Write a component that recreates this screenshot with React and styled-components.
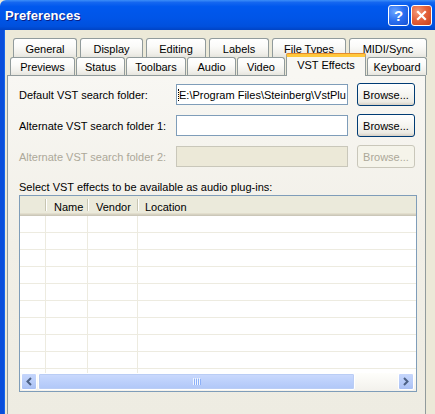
import React from 'react';
import styled, { createGlobalStyle, css } from 'styled-components';

const GlobalStyle = createGlobalStyle`
  body {
    margin: 0;
    background: #ece9d8;
    font-family: Tahoma, "Liberation Sans", Arial, sans-serif;
    font-size: 11px;
    color: #000;
  }
`;

const Window = styled.div`
  width: 435px;
  height: 414px;
  overflow: hidden;
  display: flex;
  flex-direction: column;
  background: #ece9d8;
`;

const TitleBar = styled.div`
  height: 30px;
  flex: none;
  display: flex;
  align-items: center;
  padding: 0 3px 0 5px;
  border-top-left-radius: 6px;
  background: linear-gradient(
    180deg,
    #3c8ef8 0%,
    #1567f0 8%,
    #0058ee 22%,
    #0055e8 60%,
    #0050dd 88%,
    #0043c4 100%
  );
`;

const Title = styled.span`
  flex: 1;
  font-family: "Liberation Sans", Arial, sans-serif;
  font-weight: bold;
  font-size: 13px;
  color: #fff;
  text-shadow: 1px 1px 0 #0a1e84;
  letter-spacing: 0.1px;
`;

const CaptionButton = styled.div`
  width: 21px;
  height: 21px;
  box-sizing: border-box;
  margin-left: 2px;
  border: 1px solid #fff;
  border-radius: 3px;
  display: flex;
  align-items: center;
  justify-content: center;
  color: #fff;
  font-family: "Liberation Sans", Arial, sans-serif;
  font-weight: bold;
  font-size: 15px;
  ${(p) =>
    p.$close
      ? css`
          background: radial-gradient(circle at 30% 30%, #f39a7c 0%, #e5623c 45%, #c8401c 100%);
        `
      : css`
          background: radial-gradient(circle at 30% 30%, #6aa4ff 0%, #2a6ef0 50%, #1450d4 100%);
        `}
`;

const Frame = styled.div`
  flex: 1;
  display: flex;
  flex-direction: column;
  border-left: 4px solid #0a4edb;
  box-shadow: inset 1px 0 0 #1666ec;
  padding: 8px 0 0 3px;
  min-height: 0;
`;

const TabRow = styled.div`
  display: flex;
  align-items: flex-end;
  gap: ${(p) => p.$gap}px;
  margin-left: ${(p) => p.$indent}px;
  height: ${(p) => p.$height}px;
  position: relative;
  z-index: ${(p) => p.$layer};
  margin-top: ${(p) => p.$overlap}px;
`;

const Tab = styled.div`
  box-sizing: border-box;
  width: ${(p) => p.$w}px;
  height: 19px;
  display: flex;
  align-items: center;
  justify-content: center;
  border: 1px solid #919b9c;
  border-bottom: none;
  border-radius: 3px 3px 0 0;
  background: linear-gradient(180deg, #ffffff 0%, #fbfbf9 40%, #f0efea 80%, #e6e5de 100%);
  white-space: nowrap;
  padding-top: 1px;
  ${(p) =>
    p.$short &&
    css`
      height: 18px;
    `}
  ${(p) =>
    p.$active &&
    css`
      height: 22px;
      margin-bottom: -1px;
      background: #f8f7f3;
      border-top: 3px solid #ffc83c;
      box-shadow: 0 -1px 0 #e68b2c;
      border-radius: 2px 2px 0 0;
      padding-top: 0;
      padding-bottom: 3px;
    `}
`;

const Panel = styled.div`
  width: 419px;
  box-sizing: border-box;
  flex: 1;
  border: 1px solid #919b9c;
  border-bottom: none;
  background: linear-gradient(180deg, #f8f7f3 0%, #f1efe7 50%, #eeece2 100%);
  padding: 8px 0 0 11px;
`;

const FolderGrid = styled.div`
  display: grid;
  grid-template-columns: 148px 172px 58px;
  grid-auto-rows: 22px;
  column-gap: 9px;
  row-gap: 9px;
  align-items: center;
`;

const Label = styled.span`
  color: ${(p) => (p.$disabled ? '#aca899' : '#000')};
  white-space: nowrap;
`;

const Field = styled.div`
  box-sizing: border-box;
  height: 21px;
  border: 1px solid ${(p) => (p.$disabled ? '#c9c7ba' : '#7f9db9')};
  background: ${(p) => (p.$disabled ? '#ece9d8' : '#fff')};
  overflow: hidden;
  white-space: nowrap;
  display: flex;
  align-items: center;
  padding-left: 1px;
  align-self: start;
`;

const FieldText = styled.span`
  display: inline-block;
  border-left: 1px dotted #000;
`;

const Button = styled.div`
  box-sizing: border-box;
  height: 23px;
  display: flex;
  align-items: center;
  justify-content: center;
  border-radius: 3px;
  border: 1px solid ${(p) => (p.$disabled ? '#c9c7ba' : '#003c74')};
  color: ${(p) => (p.$disabled ? '#aca899' : '#000')};
  background: ${(p) =>
    p.$disabled
      ? '#f5f4ea'
      : 'linear-gradient(180deg, #ffffff 0%, #f6f6f2 45%, #ecebe4 85%, #d6d0c5 100%)'};
  margin-top: -1px;
`;

const Caption = styled.div`
  margin: 13px 0 1px;
  line-height: 13px;
`;

const ListView = styled.div`
  width: 398px;
  height: 197px;
  box-sizing: border-box;
  border: 1px solid #7f9db9;
  background: #fff;
  display: flex;
  flex-direction: column;
  overflow: hidden;
`;

const HeaderRow = styled.div`
  height: 20px;
  flex: none;
  display: flex;
  background: #ebeadb;
  box-shadow: inset 0 -1px 0 #cbc7b8, inset 0 -2px 0 #d6d2c2, inset 0 -3px 0 #e2decd;
`;

const HeaderCell = styled.div`
  position: relative;
  box-sizing: border-box;
  width: ${(p) => (p.$w ? `${p.$w}px` : 'auto')};
  flex: ${(p) => (p.$w ? 'none' : 1)};
  padding-left: ${(p) => p.$pad}px;
  padding-top: 1px;
  display: flex;
  align-items: center;
  &::after {
    content: '';
    display: ${(p) => (p.$w ? 'block' : 'none')};
    position: absolute;
    right: 0;
    top: 3px;
    bottom: 5px;
    width: 1px;
    background: #c7c5b2;
    box-shadow: 1px 0 0 #fff;
  }
`;

const Body = styled.div`
  flex: 1;
  overflow: hidden;
`;

const Row = styled.div`
  display: flex;
  height: 17px;
  box-sizing: border-box;
  border-bottom: 1px solid #edebe0;
`;

const Cell = styled.div`
  box-sizing: border-box;
  width: ${(p) => (p.$w ? `${p.$w}px` : 'auto')};
  flex: ${(p) => (p.$w ? 'none' : 1)};
  border-right: ${(p) => (p.$w ? '1px solid #edebe0' : 'none')};
`;

const ScrollBar = styled.div`
  height: 17px;
  flex: none;
  display: flex;
  align-items: stretch;
  padding: 0 2px 1px 1px;
  background: linear-gradient(180deg, #fefefb 0%, #f3f1ec 100%);
`;

const ArrowButton = styled.div`
  width: 16px;
  box-sizing: border-box;
  border: 1px solid #fff;
  border-radius: 2px;
  background: linear-gradient(180deg, #c5d6fc 0%, #b7cbf8 60%, #a9c0f4 100%);
  display: flex;
  align-items: center;
  justify-content: center;
`;

const Thumb = styled.div`
  width: 317px;
  box-sizing: border-box;
  margin-left: 1px;
  border: 1px solid #fff;
  border-radius: 2px;
  background: linear-gradient(180deg, #cbdafd 0%, #bcd0fb 50%, #b0c7f7 100%);
  box-shadow: inset 0 0 0 1px #bacdf5;
  display: flex;
  align-items: center;
  justify-content: center;
`;

const Track = styled.div`
  flex: 1;
`;

const Chevron = ({ dir }) => (
  <svg width="8" height="9" viewBox="0 0 8 9">
    <path
      d={dir === 'left' ? 'M6 1 L2.5 4.5 L6 8' : 'M2 1 L5.5 4.5 L2 8'}
      fill="none"
      stroke="#4d6185"
      strokeWidth="2"
    />
  </svg>
);

const Grip = () => (
  <svg width="8" height="7" viewBox="0 0 8 7">
    {[0, 2, 4, 6].map((x) => (
      <g key={x}>
        <rect x={x} y="0" width="1" height="7" fill="#eef4fe" />
        <rect x={x + 1} y="1" width="1" height="6" fill="#8cb0f8" />
      </g>
    ))}
  </svg>
);

const CloseGlyph = () => (
  <svg width="11" height="11" viewBox="0 0 11 11">
    <path d="M2 2 L9 9 M9 2 L2 9" stroke="#fff" strokeWidth="2.2" strokeLinecap="square" />
  </svg>
);

const backTabs = [
  { label: 'General', w: 64 },
  { label: 'Display', w: 63 },
  { label: 'Editing', w: 60 },
  { label: 'Labels', w: 60 },
  { label: 'File Types', w: 74 },
  { label: 'MIDI/Sync', w: 78 },
];

const frontTabs = [
  { label: 'Previews', w: 65 },
  { label: 'Status', w: 49 },
  { label: 'Toolbars', w: 60 },
  { label: 'Audio', w: 49 },
  { label: 'Video', w: 48 },
  { label: 'VST Effects', w: 80, active: true },
  { label: 'Keyboard', w: 60 },
];

const folders = [
  { label: 'Default VST search folder:', value: 'E:\\Program Files\\Steinberg\\VstPlu' },
  { label: 'Alternate VST search folder 1:', value: '' },
  { label: 'Alternate VST search folder 2:', value: '', disabled: true },
];

const columns = [
  { name: '', w: 26, pad: 0 },
  { name: 'Name', w: 42, pad: 8 },
  { name: 'Vendor', w: 50, pad: 8 },
  { name: 'Location', pad: 7 },
];

const App = () => {
  return (
    <Window>
      <GlobalStyle />
      <TitleBar>
        <Title>Preferences</Title>
        <CaptionButton>?</CaptionButton>
        <CaptionButton $close>
          <CloseGlyph />
        </CaptionButton>
      </TitleBar>
      <Frame>
        <TabRow $gap={3} $indent={6} $height={19} $layer={0} $overlap={0}>
          {backTabs.map((t) => (
            <Tab key={t.label} $w={t.w}>
              {t.label}
            </Tab>
          ))}
        </TabRow>
        <TabRow $gap={1} $indent={3} $height={21} $layer={1} $overlap={-3}>
          {frontTabs.map((t) => (
            <Tab key={t.label} $w={t.w} $short $active={t.active}>
              {t.label}
            </Tab>
          ))}
        </TabRow>
        <Panel>
          <FolderGrid>
            {folders.map((f) => (
              <React.Fragment key={f.label}>
                <Label $disabled={f.disabled}>{f.label}</Label>
                <Field $disabled={f.disabled}>
                  {f.value && <FieldText>{f.value}</FieldText>}
                </Field>
                <Button $disabled={f.disabled}>Browse...</Button>
              </React.Fragment>
            ))}
          </FolderGrid>
          <Caption>Select VST effects to be available as audio plug-ins:</Caption>
          <ListView>
            <HeaderRow>
              {columns.map((c, i) => (
                <HeaderCell key={i} $w={c.w} $pad={c.pad}>
                  {c.name}
                </HeaderCell>
              ))}
            </HeaderRow>
            <Body>
              {Array.from({ length: 10 }).map((_, r) => (
                <Row key={r}>
                  {columns.map((c, i) => (
                    <Cell key={i} $w={c.w} />
                  ))}
                </Row>
              ))}
            </Body>
            <ScrollBar>
              <ArrowButton>
                <Chevron dir="left" />
              </ArrowButton>
              <Thumb>
                <Grip />
              </Thumb>
              <Track />
              <ArrowButton>
                <Chevron dir="right" />
              </ArrowButton>
            </ScrollBar>
          </ListView>
        </Panel>
      </Frame>
    </Window>
  );
};

export default App;
